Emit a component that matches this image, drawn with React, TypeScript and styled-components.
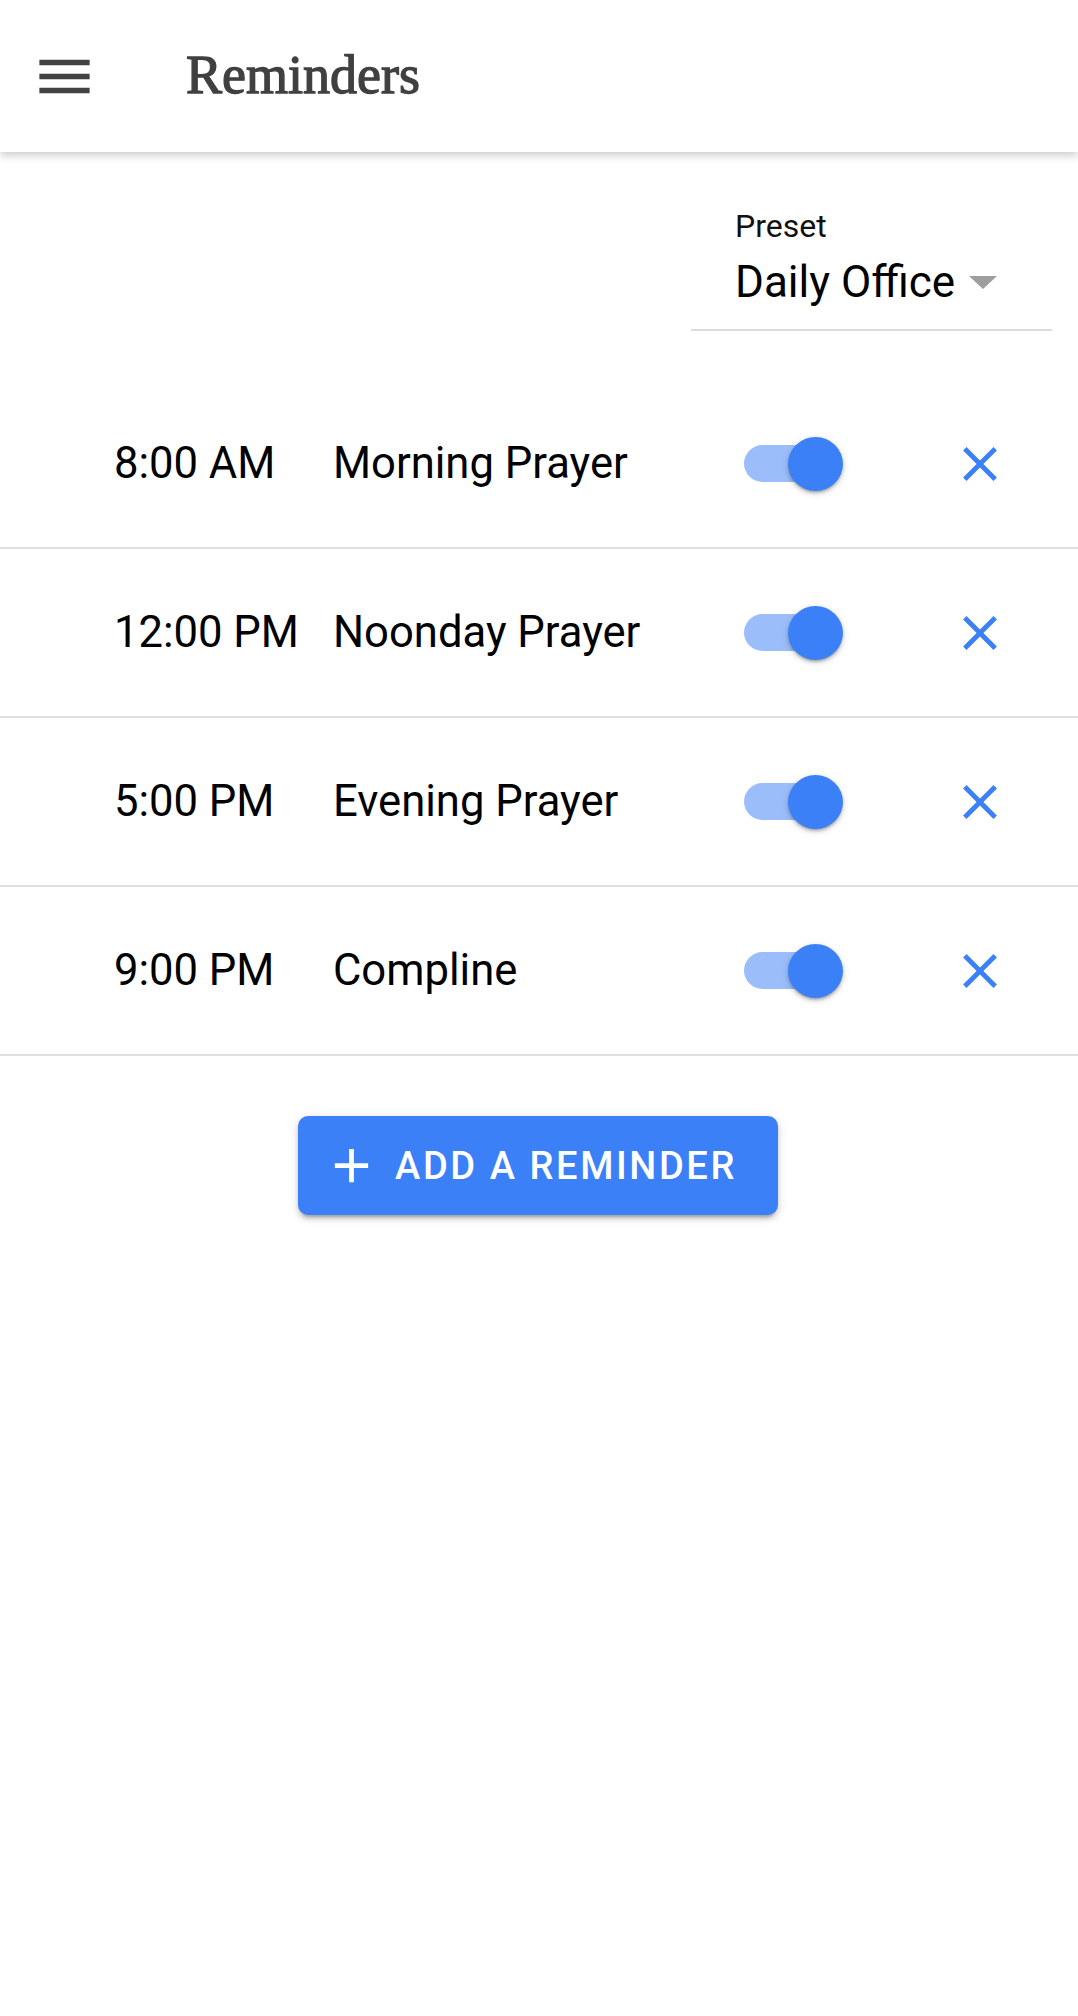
import React from 'react';
import styled, { createGlobalStyle } from 'styled-components';

const GlobalStyle = createGlobalStyle`
  html, body {
    margin: 0;
    padding: 0;
    background: #ffffff;
  }
  body {
    font-family: Roboto, "Noto Sans", sans-serif;
    color: #000000;
  }
`;

const BLUE = '#3c80f8';

const Page = styled.div`
  min-height: 2016px;
  background: #ffffff;
`;

const Header = styled.header`
  position: relative;
  z-index: 2;
  height: 152px;
  display: flex;
  align-items: center;
  padding-left: 31px;
  background: #ffffff;
  box-shadow: 0 3px 9px rgba(0, 0, 0, 0.22);
`;

const MenuButton = styled.button`
  display: flex;
  padding: 0;
  border: 0;
  background: transparent;
  color: #424242;
  cursor: pointer;
`;

const Title = styled.h1`
  margin: -2px 0 0 88px;
  font-family: "Liberation Serif", "DejaVu Serif", serif;
  font-size: 54px;
  font-weight: 400;
  line-height: 1;
  color: #404040;
  -webkit-text-stroke: 1.3px #404040;
`;

const PresetBar = styled.div`
  display: flex;
  justify-content: flex-end;
  padding: 56px 26px 0 0;
`;

const SelectField = styled.div`
  width: 361px;
  box-sizing: border-box;
  padding: 0 0 22px 44px;
  border-bottom: 2px solid #dddddd;
`;

const FieldLabel = styled.div`
  font-size: 32px;
  line-height: 36px;
  color: #111111;
`;

const SelectValue = styled.div`
  display: flex;
  align-items: center;
  margin-top: 13px;
  padding-right: 55px;
  font-size: 44px;
  line-height: 50px;
  color: #000000;
`;

const ValueText = styled.span`
  flex: 1;
`;

const DropArrow = styled.span`
  width: 0;
  height: 0;
  border-left: 14px solid transparent;
  border-right: 14px solid transparent;
  border-top: 13px solid #9e9e9e;
`;

const List = styled.ul`
  list-style: none;
  margin: 49px 0 0;
  padding: 0;
`;

const Row = styled.li`
  height: 167px;
  display: flex;
  align-items: center;
  padding: 0 69px 0 114px;
  border-bottom: 2px solid #e0e0e0;
`;

const Time = styled.span`
  width: 219px;
  flex-shrink: 0;
  font-size: 43.6px;
  line-height: 50px;
`;

const Name = styled.span`
  flex: 1;
  font-size: 43.6px;
  line-height: 50px;
`;

const SwitchRoot = styled.span`
  position: relative;
  width: 99px;
  height: 54px;
  flex-shrink: 0;
`;

const Track = styled.span<{ $on: boolean }>`
  position: absolute;
  left: 0;
  top: 8px;
  width: 89px;
  height: 37px;
  border-radius: 19px;
  background: ${({ $on }) => ($on ? '#9bbefb' : '#bdbdbd')};
`;

const Thumb = styled.span<{ $on: boolean }>`
  position: absolute;
  top: 0;
  left: ${({ $on }) => ($on ? '44px' : '0')};
  width: 55px;
  height: 54px;
  border-radius: 50%;
  background: ${({ $on }) => ($on ? BLUE : '#fafafa')};
  box-shadow: 0 3px 3px -2px rgba(0, 0, 0, 0.25), 0 2px 4px rgba(0, 0, 0, 0.18),
    0 2px 8px rgba(0, 0, 0, 0.1);
`;

const IconButton = styled.button`
  display: flex;
  margin-left: 108px;
  padding: 0;
  border: 0;
  background: transparent;
  color: ${BLUE};
  cursor: pointer;
`;

const Actions = styled.div`
  display: flex;
  justify-content: center;
  padding-top: 60px;
`;

const AddButton = styled.button`
  display: flex;
  align-items: center;
  gap: 15px;
  height: 99px;
  padding: 0 41px 0 25px;
  margin-left: -2px;
  border: 0;
  border-radius: 10px;
  background: ${BLUE};
  color: #ffffff;
  font-family: Roboto, sans-serif;
  font-size: 38px;
  font-weight: 500;
  letter-spacing: 2.6px;
  text-transform: uppercase;
  box-shadow: 0 6px 3px -4px rgba(0, 0, 0, 0.2), 0 4px 5px 0 rgba(0, 0, 0, 0.14),
    0 2px 12px 0 rgba(0, 0, 0, 0.12);
  cursor: pointer;
`;

const reminders = [
  { time: '8:00 AM', name: 'Morning Prayer', on: true },
  { time: '12:00 PM', name: 'Noonday Prayer', on: true },
  { time: '5:00 PM', name: 'Evening Prayer', on: true },
  { time: '9:00 PM', name: 'Compline', on: true },
];

const MenuIcon = () => (
  <svg width="67" height="67" viewBox="0 0 24 24" fill="currentColor">
    <path d="M3 18h18v-2H3v2zm0-5h18v-2H3v2zm0-7v2h18V6H3z" />
  </svg>
);

const CloseIcon = () => (
  <svg width="58" height="58" viewBox="0 0 24 24" fill="currentColor">
    <path d="M19 6.41 17.59 5 12 10.59 6.41 5 5 6.41 10.59 12 5 17.59 6.41 19 12 13.41 17.59 19 19 17.59 13.41 12z" />
  </svg>
);

const AddIcon = () => (
  <svg width="57" height="57" viewBox="0 0 24 24" fill="currentColor">
    <path d="M19 13h-6v6h-2v-6H5v-2h6V5h2v6h6v2z" />
  </svg>
);

const App: React.FC = () => {
  return (
    <Page>
      <GlobalStyle />
      <Header>
        <MenuButton aria-label="menu">
          <MenuIcon />
        </MenuButton>
        <Title>Reminders</Title>
      </Header>

      <PresetBar>
        <SelectField>
          <FieldLabel>Preset</FieldLabel>
          <SelectValue>
            <ValueText>Daily Office</ValueText>
            <DropArrow />
          </SelectValue>
        </SelectField>
      </PresetBar>

      <List>
        {reminders.map((r) => (
          <Row key={r.time}>
            <Time>{r.time}</Time>
            <Name>{r.name}</Name>
            <SwitchRoot>
              <Track $on={r.on} />
              <Thumb $on={r.on} />
            </SwitchRoot>
            <IconButton aria-label="delete">
              <CloseIcon />
            </IconButton>
          </Row>
        ))}
      </List>

      <Actions>
        <AddButton>
          <AddIcon />
          Add a reminder
        </AddButton>
      </Actions>
    </Page>
  );
};

export default App;
